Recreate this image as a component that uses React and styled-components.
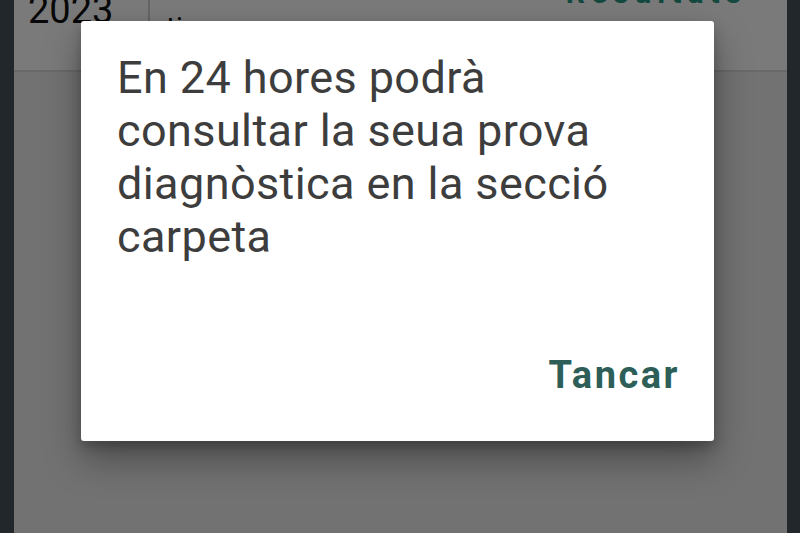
import React from 'react';
import styled, { createGlobalStyle } from 'styled-components';

const GlobalStyle = createGlobalStyle`
    html, body {
        margin: 0;
        padding: 0;
        width: 800px;
        height: 533px;
        overflow: hidden;
        background: #22272b;
        font-family: Roboto, "Noto Sans", "Liberation Sans", sans-serif;
    }
`;

const Device = styled.div`
    display: flex;
    width: 800px;
    height: 533px;
    background: #22272b;
`;

const Bezel = styled.div`
    width: ${props => props.size}px;
    flex-shrink: 0;
    background: #22272b;
`;

const Screen = styled.div`
    position: relative;
    flex: 1;
    overflow: hidden;
    background: #eeeeee;
`;

const Row = styled.div`
    display: flex;
    align-items: flex-start;
    height: 70px;
    background: #ffffff;
    border-bottom: 2px solid #dcdcdc;
    overflow: hidden;
`;

const Year = styled.div`
    width: 120px;
    padding-left: 14px;
    margin-top: -10px;
    font-size: 38px;
    color: #111;
    border-right: 2px solid #d4d4d4;
    height: 60px;
    line-height: 40px;
`;

const Subject = styled.div`
    padding-left: 16px;
    margin-top: 10px;
    font-size: 30px;
    color: #111;
    flex: 1;
`;

const Marks = styled.div`
    margin-top: -25px;
    padding-right: 40px;
    font-size: 30px;
    font-weight: 700;
    color: #2a9a84;
    letter-spacing: 6px;
`;

const Scrim = styled.div`
    position: absolute;
    inset: 0;
    background: rgba(0, 0, 0, 0.52);
    padding: 21px 0 0 67px;
`;

const Dialog = styled.div`
    width: 633px;
    height: 420px;
    box-sizing: border-box;
    background: #ffffff;
    border-radius: 3px;
    box-shadow: 0 18px 36px rgba(0, 0, 0, 0.35), 0 6px 12px rgba(0, 0, 0, 0.2);
    display: flex;
    flex-direction: column;
    padding: 30px 34px 44px 36px;
`;

const Message = styled.p`
    margin: 0;
    flex: 1;
    max-width: 515px;
    font-size: 45px;
    line-height: 53px;
    letter-spacing: 0.4px;
    color: #3d3d3d;
`;

const Actions = styled.div`
    display: flex;
    justify-content: flex-end;
`;

const TextButton = styled.button`
    border: none;
    background: none;
    padding: 0;
    font-family: inherit;
    font-size: 38px;
    font-weight: 700;
    letter-spacing: 2.5px;
    color: #2d5f58;
    cursor: pointer;
`;

export default function App() {
    return (
        <Device>
            <GlobalStyle />
            <Bezel size={14} />
            <Screen>
                <Row>
                    <Year>2023</Year>
                    <Subject>ti..</Subject>
                    <Marks>Resultats</Marks>
                </Row>
                <Scrim>
                    <Dialog role='dialog'>
                        <Message>
                            En 24 hores podrà consultar la seua prova diagnòstica en la secció carpeta
                        </Message>
                        <Actions>
                            <TextButton>Tancar</TextButton>
                        </Actions>
                    </Dialog>
                </Scrim>
            </Screen>
            <Bezel size={13} />
        </Device>
    );
}
